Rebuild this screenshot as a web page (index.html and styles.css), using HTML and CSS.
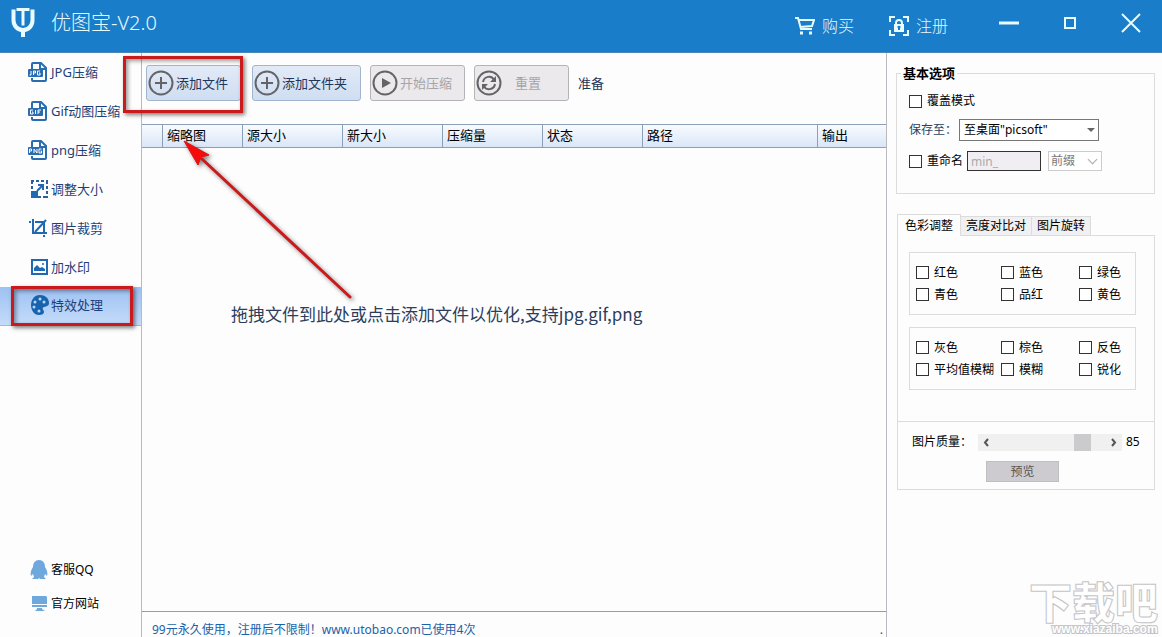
FILE: index.html
```
<!doctype html>
<html lang="zh-CN">
  <head>
    <meta charset="utf-8">
    <title>优图宝-V2.0</title>
    <link rel="stylesheet" href="styles.css">
  </head>
  <body>
    <header>
      <svg class="logo" viewBox="0 0 24 30">
        <path d="M2.500 1.500V12c0 6 4 10 9.500 10s9.500-4 9.500-10V1.500" fill="none" stroke="#e8fbff" stroke-width="4"/>
        <path d="M5.500 1.500h13M12 1.500v16" fill="none" stroke="#e8fbff" stroke-width="3"/>
        <path d="M12 21v8" stroke="#e8fbff" stroke-width="4"/>
      </svg>
      <h1>优图宝-V2.0</h1>
      <nav>
        <a href="#">
          <svg viewBox="0 0 20 20" fill="none" stroke="#e8fbff" stroke-width="2">
            <path d="M0 2h3l3 11h11M4 4h15l-2 6-12 1"/>
            <path d="M5 17h3M14 17h3" stroke-width="3"/>
          </svg>
          购买
        </a>
        <a href="#">
          <svg viewBox="0 0 20 20" fill="none" stroke="#e8fbff" stroke-width="2">
            <path d="M1 6V1h5M14 1h5v5M19 14v5h-5M6 19H1v-5"/>
            <path d="M7 9V7a3 3 0 0 1 6 0v2"/>
            <path d="M5 8h10v8H5zM10 10a1 1 0 0 0-1 2v2h2v-2a1 1 0 0 0-1-2z" fill="#e8fbff" fill-rule="evenodd" stroke="none"/>
          </svg>
          注册
        </a>
      </nav>
      <div class="window-buttons">
        <button type="button" aria-label="最小化"><svg viewBox="0 0 20 20"><path d="M0 10h20" stroke-width="3"/></svg></button>
        <button type="button" aria-label="最大化"><svg viewBox="0 0 20 20"><path d="M5 5h10v10H5z" stroke-width="2"/></svg></button>
        <button type="button" aria-label="关闭"><svg viewBox="0 0 20 20"><path d="M1 1l18 18M19 1L1 19" stroke-width="2"/></svg></button>
      </div>
    </header>
    <div class="content">
      <aside class="sidebar">
        <ul class="menu">
          <li><a href="#">
            <svg viewBox="0 0 20 20">
              <path d="M4 7V2q0-1 1-1h8l5 5v12q0 1-1 1H5q-1 0-1-1v-2M12 1v6h6" fill="none" stroke="#2a6cb0" stroke-width="2"/>
              <rect x="0" y="7" width="15" height="8" rx="1" fill="#2a6cb0"/>
              <path d="M3 9v4H1.500M5.500 13V9h2v2h-2M12 9H9.500v4H12v-2h-1" fill="none" stroke="#fff"/>
            </svg>JPG压缩</a></li>
          <li><a href="#">
            <svg viewBox="0 0 20 20">
              <path d="M4 7V2q0-1 1-1h8l5 5v12q0 1-1 1H5q-1 0-1-1v-2M12 1v6h6" fill="none" stroke="#2a6cb0" stroke-width="2"/>
              <rect x="0" y="7" width="15" height="8" rx="1" fill="#2a6cb0"/>
              <path d="M5 9H2.500v4H5v-2H4M7.500 9v4M10 13V9h3M10 11h2" fill="none" stroke="#fff"/>
            </svg>Gif动图压缩</a></li>
          <li><a href="#">
            <svg viewBox="0 0 20 20">
              <path d="M4 7V2q0-1 1-1h8l5 5v12q0 1-1 1H5q-1 0-1-1v-2M12 1v6h6" fill="none" stroke="#2a6cb0" stroke-width="2"/>
              <rect x="0" y="7" width="15" height="8" rx="1" fill="#2a6cb0"/>
              <path d="M1.500 13V9h2v2h-2M6 13V9l3 4V9M13.500 9H11v4h2.500v-2h-1" fill="none" stroke="#fff"/>
            </svg>png压缩</a></li>
          <li><a href="#">
            <svg viewBox="0 0 20 20">
              <path d="M3 2h17M19 2v17M10 18h10M4 2v8" fill="none" stroke="#2a5f9c" stroke-width="2" stroke-dasharray="3 2"/>
              <path d="M3 12h7v7H3z" fill="#1f68b4"/>
              <path d="M9 12l6-6M10 6h5v5" fill="none" stroke="#1f68b4" stroke-width="2"/>
            </svg>调整大小</a></li>
          <li><a href="#">
            <svg viewBox="0 0 20 20" fill="none" stroke="#1f68b4" stroke-width="2">
              <path d="M1 4h2M5 1v14h14M7 4h9v12M16 17v2M7 14L18 2"/>
            </svg>图片裁剪</a></li>
          <li><a href="#">
            <svg viewBox="0 0 20 20">
              <path d="M4 3h15v14H4z" fill="none" stroke="#1f68b4" stroke-width="2"/>
              <path d="M6 14v-3l3-3 3 3 2-1 3 2v2z" fill="#1f68b4"/>
              <circle cx="15" cy="7" r="1" fill="#1f68b4"/>
            </svg>加水印</a></li>
          <li class="active"><a href="#">
            <svg viewBox="0 0 20 20">
              <path d="M12 0C6 0 3 5 3 10s3 10 8 10c3 0 5-1 5-3s-3-4 0-5c3-1 5-1 5-4 0-5-4-8-9-8z" fill="#1763ae"/>
              <g fill="#b8d5f7"><circle cx="6" cy="12" r="1.500"/><circle cx="7" cy="7" r="1.500"/><circle cx="12" cy="4" r="1.500"/><circle cx="16" cy="7" r="1.500"/><circle cx="11" cy="16" r="1.500"/></g>
            </svg>特效处理</a><span class="mark"></span></li>
        </ul>
        <ul class="links">
          <li><a href="#">
            <svg viewBox="0 0 20 20" fill="#6fa8dc"><path d="M11 0C7 0 5 3 5 7c-2 3-3 6-2 9l2-2 1 3-2 2h6l1-1 1 1h6l-2-2 1-3 2 2c1-3 0-6-2-9 0-4-2-7-6-7z"/></svg>客服QQ</a></li>
          <li><a href="#">
            <svg viewBox="0 0 20 20" fill="#6fa8dc"><path d="M4 2h14l1 1v7H4zM4 11h15v2H4zM9 14h5v1l3 2H7l2-2z"/></svg>官方网站</a></li>
        </ul>
      </aside>
      <main>
        <div class="toolbar">
          <div class="marked">
            <button type="button">
              <svg viewBox="0 0 26 26"><circle cx="13" cy="13" r="11.500"/><path d="M13 7v12M7 13h12"/></svg>添加文件
            </button>
            <span class="mark"></span>
          </div>
          <button type="button" class="wide">
            <svg viewBox="0 0 26 26"><circle cx="13" cy="13" r="11.500"/><path d="M13 7v12M7 13h12"/></svg>添加文件夹
          </button>
          <button type="button" disabled>
            <svg viewBox="0 0 26 26"><circle cx="13" cy="13" r="11.500"/><path d="M10 8l9 5-9 5z" fill="#646468" stroke="none"/></svg>开始压缩
          </button>
          <button type="button" disabled>
            <svg viewBox="0 0 26 26"><circle cx="13" cy="13" r="11.500"/><path d="M7 12c1-6 9-7 11-2M19 14c-1 6-9 7-11 2"/><path d="M20 6v6h-6zM6 20v-6h6z" fill="#646468" stroke="none"/></svg><span class="reset">重置</span>
          </button>
          <span class="state">准备</span>
        </div>
        <table>
          <thead>
            <tr>
              <th class="col-check"></th>
              <th class="col-thumb">缩略图</th>
              <th class="col-size">源大小</th>
              <th class="col-size">新大小</th>
              <th class="col-size">压缩量</th>
              <th class="col-size">状态</th>
              <th>路径</th>
              <th class="col-output">输出</th>
            </tr>
          </thead>
        </table>
        <div class="drop-area">
          <p>拖拽文件到此处或点击添加文件以优化,支持jpg.gif,png</p>
          <svg class="arrow" viewBox="0 0 180 170">
            <path d="M20 20L168 158" stroke="#cb1a1b" stroke-width="3" stroke-linecap="round"/>
            <path d="M2 2l25 14-8 2-3 8z" fill="#f50b0b" stroke="#e01010"/>
          </svg>
        </div>
        <div class="statusbar">
          <a href="#">99元永久使用，注册后不限制！www.utobao.com已使用4次</a>
          <span>.</span>
        </div>
      </main>
      <section class="options">
        <fieldset class="basic">
          <legend>基本选项</legend>
          <label class="check"><input type="checkbox">覆盖模式</label>
          <div class="row">
            <label for="save-to">保存至：</label>
            <span class="select save"><select id="save-to"><option>至桌面"picsoft"</option></select></span>
          </div>
          <div class="row rename">
            <label class="check"><input type="checkbox">重命名</label>
            <input type="text" class="prefix" value="min_" aria-label="重命名" disabled>
            <span class="select position"><select aria-label="位置" disabled><option>前缀</option></select></span>
          </div>
        </fieldset>
        <div class="tabs">
          <button type="button" class="current">色彩调整</button>
          <button type="button">亮度对比对</button>
          <button type="button">图片旋转</button>
        </div>
        <div class="tab-panel">
          <div class="group">
            <label class="check"><input type="checkbox">红色</label>
            <label class="check"><input type="checkbox">蓝色</label>
            <label class="check"><input type="checkbox">绿色</label>
            <label class="check"><input type="checkbox">青色</label>
            <label class="check"><input type="checkbox">品红</label>
            <label class="check"><input type="checkbox">黄色</label>
          </div>
          <div class="group">
            <label class="check"><input type="checkbox">灰色</label>
            <label class="check"><input type="checkbox">棕色</label>
            <label class="check"><input type="checkbox">反色</label>
            <label class="check"><input type="checkbox">平均值模糊</label>
            <label class="check"><input type="checkbox">模糊</label>
            <label class="check"><input type="checkbox">锐化</label>
          </div>
        </div>
        <div class="quality">
          <div class="quality-row">
            <label for="quality">图片质量：</label>
            <div class="scroll">
              <button type="button" aria-label="减小"><svg viewBox="0 0 17 17"><path d="M10 5L7 8.500 10 12"/></svg></button>
              <input type="range" id="quality" min="0" max="100" value="85">
              <button type="button" aria-label="增大"><svg viewBox="0 0 17 17"><path d="M7 5l3 3.500L7 12"/></svg></button>
            </div>
            <output for="quality">85</output>
          </div>
          <button type="button" class="preview">预览</button>
        </div>
      </section>
    </div>
    <svg class="watermark" viewBox="0 0 136 58">
      <text x="3" y="40" class="watermark-name">下载吧</text>
      <text x="26" y="54" class="watermark-url">www.xiazaiba.com</text>
    </svg>
  </body>
</html>
```
FILE: styles.css
```
* {
  box-sizing: border-box;
}
body {
  margin: 0;
  height: 100vh;
  display: flex;
  flex-direction: column;
  overflow: hidden;
  position: relative;
  background-color: #fdfdfe;
  font-family: "Noto Sans", "Noto Sans CJK SC", sans-serif;
  font-size: 13px;
  line-height: 18px;
  color: #000;
}
a {
  color: inherit;
  text-decoration: none;
}
button, input, select {
  font: inherit;
  color: inherit;
  margin: 0;
  padding: 0;
}
ul {
  list-style: none;
  margin: 0;
  padding: 0;
}
header {
  flex: none;
  height: 53px;
  display: flex;
  align-items: center;
  padding: 0 21px 6px 11px;
  background-color: #1a7dc9;
  border-bottom: 1px solid #4a86b8;
  color: #e8fbff;
}
.logo {
  width: 24px;
  height: 30px;
}
header h1 {
  margin: 0 auto 0 16px;
  font-size: 20px;
  line-height: 26px;
  font-weight: 300;
}
nav {
  display: flex;
  gap: 35px;
  padding-top: 6px;
  font-size: 16px;
  line-height: 22px;
  font-weight: 300;
}
nav a {
  display: flex;
  align-items: center;
  gap: 7px;
}
nav svg {
  width: 20px;
  height: 20px;
}
.window-buttons {
  display: flex;
  gap: 41px;
  padding-left: 51px;
}
.window-buttons button {
  width: 20px;
  height: 20px;
  border: none;
  background: transparent;
}
.window-buttons svg {
  display: block;
  fill: none;
  stroke: #e8fbff;
}

.content {
  flex: 1;
  min-height: 0;
  display: flex;
}
.sidebar {
  flex: none;
  width: 142px;
  display: flex;
  flex-direction: column;
  justify-content: space-between;
  border-right: 1px solid #b4bac6;
  color: #1f3f78;
}
.sidebar a {
  display: flex;
  align-items: center;
  gap: 3px;
  padding-left: 28px;
}
.sidebar svg {
  width: 20px;
  height: 20px;
  overflow: visible;
}
.menu li {
  position: relative;
}
.menu a {
  height: 39px;
  padding-bottom: 2px;
}
.menu .active a {
  background: linear-gradient(#9dc1f2, #c5dcfa);
  border-bottom: 1px solid #9db9df;
}
.links {
  padding-bottom: 16px;
  font-size: 12px;
  color: #000;
}
.links a {
  height: 34px;
}
.mark {
  position: absolute;
  border: 3px solid #cb1a1b;
  box-shadow: 2px 2px 4px rgba(0, 0, 0, 0.5), inset 2px 2px 4px rgba(0, 0, 0, 0.4);
  pointer-events: none;
  z-index: 1;
}
.menu .mark {
  left: 11px;
  right: 8px;
  top: -1px;
  bottom: 0;
}

main {
  flex: 1;
  min-width: 0;
  display: flex;
  flex-direction: column;
}
.toolbar {
  display: flex;
  align-items: center;
  gap: 9px;
  padding: 12px 4px 23px;
  color: #1f355c;
}
.toolbar button {
  width: 95px;
  height: 36px;
  display: flex;
  align-items: center;
  gap: 2px;
  padding: 0 0 1px 1px;
  border: 1px solid #a3b4cd;
  border-radius: 3px;
  background: linear-gradient(#e2eaf6, #cfdef2);
}
.toolbar button.wide {
  width: 109px;
}
.toolbar button:disabled {
  border-color: #b4b4b8;
  background: #ebe9ec;
  color: #a5a5aa;
}
.toolbar svg {
  width: 26px;
  height: 26px;
  fill: none;
  stroke: #646468;
  stroke-width: 2;
}
.marked {
  position: relative;
  padding-right: 2px;
}
.marked .mark {
  left: -23px;
  right: 0;
  top: -9px;
  bottom: -12px;
}
.reset {
  padding-left: 11px;
}
table {
  width: 100%;
  table-layout: fixed;
  border-spacing: 0;
  background: linear-gradient(#fafcff, #d8e5f7);
}
th {
  height: 24px;
  padding: 0 4px 2px;
  border: solid #8c9fb9;
  border-width: 1px 1px 1px 0;
  text-align: left;
  font-weight: normal;
}
th:last-child {
  border-right: none;
}
.col-check {
  width: 21px;
}
.col-thumb {
  width: 80px;
}
.col-size {
  width: 100px;
}
.col-output {
  width: 68px;
}
.drop-area {
  flex: 1;
  position: relative;
  padding: 154px 0 0 89px;
}
.drop-area p {
  margin: 0;
  font-family: "Noto Sans CJK SC", sans-serif;
  font-size: 17px;
  line-height: 24px;
  color: #2c3e5c;
}
.arrow {
  position: absolute;
  left: 40px;
  top: -9px;
  width: 180px;
  height: 170px;
  filter: drop-shadow(2px 2px 2px rgba(0, 0, 0, 0.5));
}
.statusbar {
  height: 26px;
  display: flex;
  justify-content: space-between;
  padding: 9px 3px 0 10px;
  border-top: 1px solid #9c9ca0;
  font-size: 12px;
  color: #1b62a8;
}

.options {
  flex: none;
  width: 276px;
  border-left: 1px solid #b8bac0;
  padding: 11px 7px 0 9px;
  font-size: 12px;
}
.basic {
  height: 130px;
  margin: 0;
  padding: 10px 12px 0;
  border: 1px solid #dcdcdc;
}
.basic legend {
  margin-left: -8px;
  padding: 0 2px;
  font-size: 13px;
  font-weight: bold;
}
.check {
  display: flex;
  align-items: center;
  gap: 5px;
  white-space: nowrap;
}
.check input {
  appearance: none;
  width: 13px;
  height: 13px;
  border: 1px solid #333;
  background: #fff;
}
.check input:checked {
  background: #1a7dc9;
}
.row {
  display: flex;
  align-items: center;
  padding-top: 9px;
  color: #2b3f60;
}
.rename {
  gap: 4px;
  padding-top: 10px;
  color: #000;
}
.select {
  position: relative;
}
.select select {
  appearance: none;
  display: block;
  width: 100%;
  height: 22px;
  padding: 0 4px;
  border: 1px solid #777;
  border-radius: 0;
  background: #fff;
  color: #000;
}
.save {
  width: 140px;
  margin-left: 2px;
}
.save::after {
  content: "";
  position: absolute;
  right: 4px;
  top: 9px;
  border: 4px solid transparent;
  border-top-color: #666;
  pointer-events: none;
}
.position {
  width: 54px;
}
.position::after {
  content: "";
  position: absolute;
  right: 6px;
  top: 5px;
  width: 6px;
  height: 6px;
  border: solid #aaa;
  border-width: 0 1px 1px 0;
  transform: rotate(45deg);
}
.select select:disabled {
  height: 20px;
  padding: 0 2px;
  border-color: #ccc;
  color: #777;
  opacity: 1;
}
.prefix {
  width: 74px;
  height: 20px;
  padding: 0 3px;
  border: 1px solid #333;
  background: #f0eef2;
  color: #aaa;
}
.rename .select {
  margin-left: 3px;
}
.tabs {
  display: flex;
  align-items: flex-end;
  margin: 20px 0 0 1px;
}
.tabs button {
  height: 19px;
  padding: 0 5px;
  line-height: 16px;
  border: 1px solid #dcdcdc;
  border-width: 1px 1px 0 0;
  background: #f0eff2;
}
.tabs .current {
  height: 22px;
  padding: 0 7px;
  border-width: 1px 1px 0 1px;
  margin-bottom: -1px;
  background: #fdfdfe;
  position: relative;
}
.tab-panel {
  height: 187px;
  display: flex;
  flex-direction: column;
  gap: 12px;
  margin-left: 1px;
  padding: 16px 18px 0 11px;
  border: 1px solid #dcdcdc;
}
.group {
  height: 63px;
  display: grid;
  grid-template-columns: 78px 71px 1fr;
  column-gap: 7px;
  align-content: center;
  row-gap: 4px;
  padding-left: 6px;
  border: 1px solid #dcdcdc;
}
.quality {
  height: 68px;
  margin-left: 1px;
  padding-top: 11px;
  border: 1px solid #dcdcdc;
  border-top: none;
}
.quality-row {
  display: flex;
  align-items: center;
  padding-left: 14px;
}
.quality-row label {
  flex: none;
  white-space: nowrap;
}
.scroll {
  flex: 1;
  min-width: 0;
  display: flex;
  height: 17px;
  margin: 0 4px 0 6px;
  background: #f0f0f1;
}
.scroll button {
  flex: none;
  width: 17px;
  border: none;
  background: transparent;
}
.scroll svg {
  display: block;
  fill: none;
  stroke: #555;
  stroke-width: 2;
}
.scroll input {
  appearance: none;
  flex: 1;
  min-width: 0;
  background: transparent;
}
.scroll input::-webkit-slider-thumb {
  appearance: none;
  width: 17px;
  height: 17px;
  background: #cbcacd;
}
.quality output {
  width: 28px;
}
.preview {
  display: block;
  width: 73px;
  height: 21px;
  margin: 10px auto 0 88px;
  border: 1px solid #bfbfbf;
  background: #cdcbcf;
  color: #555;
}
.watermark {
  position: absolute;
  right: 0;
  bottom: 0;
  width: 136px;
  height: 58px;
  pointer-events: none;
}
.watermark text {
  font-family: "Noto Sans CJK SC", sans-serif;
  fill: #fff;
  stroke: #c4c4c8;
}
.watermark-name {
  font-size: 43px;
  font-weight: 900;
}
.watermark text.watermark-url {
  font-family: "Liberation Sans", sans-serif;
  font-size: 12px;
  font-weight: bold;
  paint-order: stroke;
  stroke-width: 2;
}
```
